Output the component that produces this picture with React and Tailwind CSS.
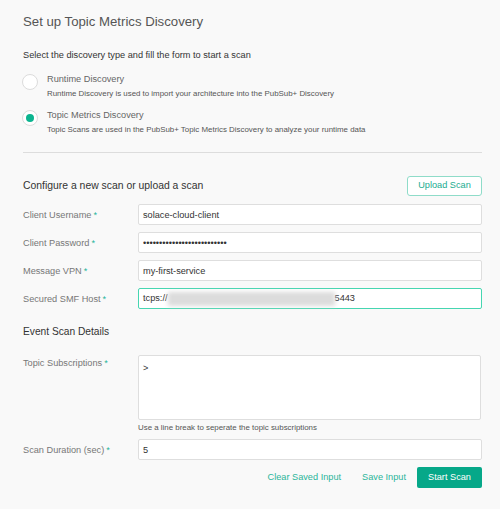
import { useState } from 'react';

// ─── Small pieces ─────────────────────────────────────────────────────────────

function Radio({ checked }) {
  return (
    <span className="flex h-[16px] w-[16px] shrink-0 items-center justify-center rounded-full border border-[#dcdcdc] bg-white">
      {checked && <span className="h-[8px] w-[8px] rounded-full bg-[#0bb48f]" />}
    </span>
  );
}

function Label({ children, top }) {
  return (
    <div className={`w-[115px] shrink-0 text-[9.2px] leading-[12px] text-[#777] ${top ? 'pt-[2px]' : ''}`}>
      {children}
      <span className="ml-[2px] text-[#1eb59a]">*</span>
    </div>
  );
}

const inputCls =
  'h-[21px] flex-1 rounded-[2px] border border-[#dedede] bg-white px-[4px] text-[9.2px] text-[#333] outline-none';

// ─── Component ────────────────────────────────────────────────────────────────

export default function App() {
  const [mode, setMode] = useState('topic');

  const options = [
    {
      id: 'runtime',
      name: 'Runtime Discovery',
      desc: 'Runtime Discovery is used to import your architecture into the PubSub+ Discovery',
    },
    {
      id: 'topic',
      name: 'Topic Metrics Discovery',
      desc: 'Topic Scans are used in the PubSub+ Topic Metrics Discovery to analyze your runtime data',
    },
  ];

  return (
    <div className="min-h-[509px] w-[500px] bg-[#f9f9f9] pl-[23px] pr-[18px] pt-[14px] font-['Liberation_Sans',Arial,sans-serif]">
      {/* Header */}
      <h1 className="text-[13.2px] leading-[16px] text-[#555]">Set up Topic Metrics Discovery</h1>
      <p className="mt-[19px] text-[9.2px] leading-[12px] text-[#333]">
        Select the discovery type and fill the form to start a scan
      </p>

      {/* Discovery type */}
      <div className="mt-[12px] flex flex-col gap-[9px]">
        {options.map(o => (
          <div key={o.id} className="flex cursor-pointer items-start gap-[9px]" onClick={() => setMode(o.id)}>
            <span className="-ml-[1px] mt-[1px]"><Radio checked={mode === o.id} /></span>
            <div>
              <div className="text-[9.2px] leading-[12px] text-[#666]">{o.name}</div>
              <div className="mt-[3px] text-[7.9px] leading-[12px] text-[#555]">{o.desc}</div>
            </div>
          </div>
        ))}
      </div>

      <div className="mt-[16px] border-t border-[#dddddd]" />

      {/* Config */}
      <div className="mt-[23px] flex h-[20px] items-center justify-between">
        <h2 className="text-[10.4px] text-[#333]">Configure a new scan or upload a scan</h2>
        <button className="h-[20px] w-[75px] rounded-[3px] border border-[#8fdcc9] bg-white text-[9.2px] text-[#1aab8f]">
          Upload Scan
        </button>
      </div>

      <div className="mt-[8px] flex flex-col gap-[7px]">
        <div className="flex items-center">
          <Label>Client Username</Label>
          <input className={inputCls} readOnly value="solace-cloud-client" />
        </div>
        <div className="flex items-center">
          <Label>Client Password</Label>
          <input className={inputCls} type="password" readOnly value="abcdefghijklmnopqrstuvwxyz" />
        </div>
        <div className="flex items-center">
          <Label>Message VPN</Label>
          <input className={inputCls} readOnly value="my-first-service" />
        </div>
        <div className="flex items-center">
          <Label>Secured SMF Host</Label>
          <div className="flex h-[21px] flex-1 items-center rounded-[2px] border border-[#46d6b1] bg-white px-[4px] text-[9.2px] text-[#333]">
            <span>tcps://</span>
            <span className="h-[14px] w-[167px] bg-[#dcdcdc] blur-[2px]" />
            <span>5443</span>
          </div>
        </div>
      </div>

      {/* Event scan */}
      <h2 className="mt-[16px] text-[10.2px] leading-[14px] text-[#333]">Event Scan Details</h2>

      <div className="mt-[16px] flex items-start">
        <Label top>Topic Subscriptions</Label>
        <div className="mr-[1px] flex-1">
          <textarea
            className="block h-[65px] w-full resize-none rounded-[2px] border border-[#dedede] bg-white px-[4px] pt-[6px] text-[9.2px] text-[#333] outline-none"
            readOnly
            value=">"
          />
          <p className="mt-[2px] text-[7.9px] leading-[12px] text-[#555]">
            Use a line break to seperate the topic subscriptions
          </p>
        </div>
      </div>

      <div className="mt-[5px] flex items-center">
        <Label>Scan Duration (sec)</Label>
        <input className={inputCls} readOnly value="5" />
      </div>

      {/* Actions */}
      <div className="mt-[7px] flex h-[21px] items-center justify-end">
        <button className="mr-[21px] text-[9.2px] text-[#2bb59a]">Clear Saved Input</button>
        <button className="mr-[11px] text-[9.2px] text-[#2bb59a]">Save Input</button>
        <button className="h-[21px] w-[65px] rounded-[2px] bg-[#06a889] text-[9.2px] text-white">Start Scan</button>
      </div>
    </div>
  );
}
